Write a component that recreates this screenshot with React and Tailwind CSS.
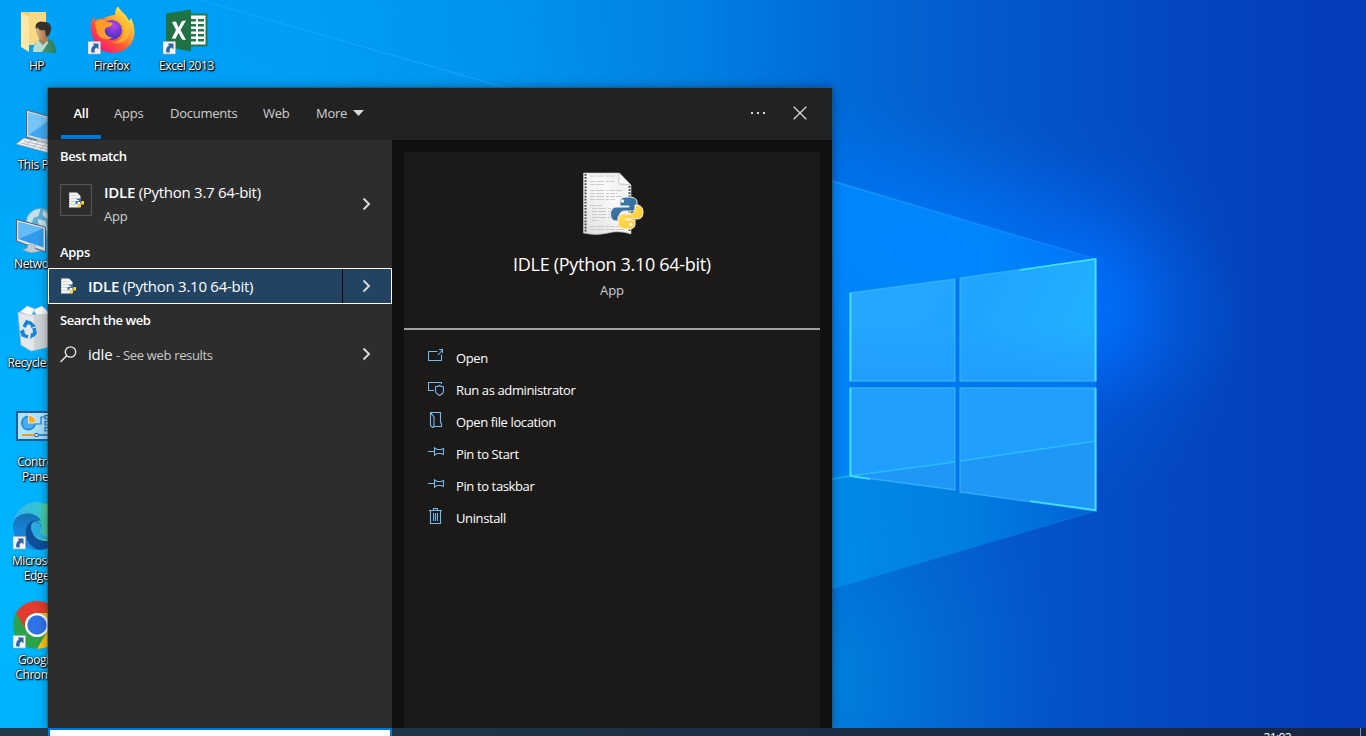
import React from "react";

const Wallpaper = () => (
  <svg className="absolute inset-0" width="1366" height="736" viewBox="0 0 1366 736">
    <defs>
      <linearGradient id="base" x1="0" x2="1366" y1="0" y2="0" gradientUnits="userSpaceOnUse">
        <stop offset="0" stopColor="#00a4fc" />
        <stop offset=".2" stopColor="#009ff8" />
        <stop offset=".38" stopColor="#0091ee" />
        <stop offset=".5" stopColor="#0081e4" />
        <stop offset=".6" stopColor="#006dd9" />
        <stop offset=".67" stopColor="#0361d0" />
        <stop offset=".75" stopColor="#0455ca" />
        <stop offset=".87" stopColor="#0446c0" />
        <stop offset="1" stopColor="#043bb8" />
      </linearGradient>
      <linearGradient id="beam" x1="400" x2="1096" y1="0" y2="0" gradientUnits="userSpaceOnUse">
        <stop offset="0" stopColor="#00a0fa" stopOpacity="0" />
        <stop offset=".6" stopColor="#008cff" />
        <stop offset=".85" stopColor="#008cff" />
        <stop offset="1" stopColor="#0078fc" />
      </linearGradient>
      <linearGradient id="lower" x1="832" x2="1096" y1="0" y2="0" gradientUnits="userSpaceOnUse">
        <stop offset="0" stopColor="#008eea" />
        <stop offset=".5" stopColor="#0082e2" />
        <stop offset="1" stopColor="#0064da" />
      </linearGradient>
      <radialGradient id="glow" cx="0" cy="0" r="1" gradientUnits="userSpaceOnUse" gradientTransform="translate(1085 310) scale(165 190)">
        <stop offset="0" stopColor="#006eff" />
        <stop offset=".25" stopColor="#0065fb" stopOpacity=".8" />
        <stop offset=".55" stopColor="#005ee8" stopOpacity=".35" />
        <stop offset="1" stopColor="#0058e0" stopOpacity="0" />
      </radialGradient>
      <radialGradient id="edgeGlow" cx="0" cy="0" r="1" gradientUnits="userSpaceOnUse" gradientTransform="translate(930 250) rotate(17) scale(330 150)">
        <stop offset="0" stopColor="#007cff" stopOpacity=".95" />
        <stop offset=".5" stopColor="#0074f4" stopOpacity=".5" />
        <stop offset="1" stopColor="#0068e0" stopOpacity="0" />
      </radialGradient>
      <radialGradient id="leftGlow" cx="0" cy="600" r="850" gradientUnits="userSpaceOnUse">
        <stop offset="0" stopColor="#00b6ff" />
        <stop offset=".35" stopColor="#00aefc" stopOpacity=".9" />
        <stop offset="1" stopColor="#0090e8" stopOpacity="0" />
      </radialGradient>
      <radialGradient id="lowGlow" cx="800" cy="680" r="260" gradientUnits="userSpaceOnUse">
        <stop offset="0" stopColor="#0088e0" stopOpacity=".95" />
        <stop offset=".5" stopColor="#0078da" stopOpacity=".5" />
        <stop offset="1" stopColor="#006ad4" stopOpacity="0" />
      </radialGradient>
      <linearGradient id="pane" x1="850" x2="1096" y1="270" y2="390" gradientUnits="userSpaceOnUse">
        <stop offset="0" stopColor="#26a6ff" />
        <stop offset=".5" stopColor="#20a6ff" />
        <stop offset="1" stopColor="#22b4ff" />
      </linearGradient>
      <linearGradient id="paneShade" x1="0" x2="0" y1="325" y2="385" gradientUnits="userSpaceOnUse">
        <stop offset="0" stopColor="#219dff" stopOpacity="0" />
        <stop offset="1" stopColor="#219dff" />
      </linearGradient>
      <linearGradient id="ray" x1="1096" x2="200" y1="0" y2="0" gradientUnits="userSpaceOnUse">
        <stop offset="0" stopColor="#20a0ff" stopOpacity=".3" />
        <stop offset=".3" stopColor="#20a4ff" stopOpacity=".7" />
        <stop offset="1" stopColor="#20b0ff" stopOpacity=".4" />
      </linearGradient>
    </defs>
    <rect width="1366" height="736" fill="url(#base)" />
    <rect width="1366" height="736" fill="url(#leftGlow)" />
    <rect width="1366" height="736" fill="url(#lowGlow)" />
    <rect width="1366" height="736" fill="url(#glow)" />
    <rect width="1366" height="500" fill="url(#edgeGlow)" />
    <path d="M200 0 832 181 1096 259V441L850 476 0 590V0Z" fill="url(#beam)" opacity=".75" />
    <path d="M200 0 832 181 1096 259" fill="none" stroke="url(#ray)" strokeWidth="1.500" />
    <path d="M832 478 850 476 1096 441V511L832 589Z" fill="url(#lower)" opacity=".9" />
    <path d="M832 589 1096 511" stroke="#0a88ee" strokeOpacity=".4" />
    <path d="M832 479 850 476" stroke="#20b8ff" strokeOpacity=".6" strokeWidth="2" />
    <path d="M957.500 278V492M850 384.500H1096" stroke="#0077ee" strokeWidth="5" />
    <path d="M850 293 955 279V381H850ZM960 278 1096 259V381H960Z" fill="url(#pane)" />
    <path d="M850 293 955 279V381H850ZM960 278 1096 259V381H960Z" fill="url(#paneShade)" />
    <path d="M850 388H955V490L850 476ZM960 388H1096V511L960 492Z" fill="#219fff" />
    <path d="M850 476 955 462V490ZM960 461 1096 441V511L960 492Z" fill="#2096f6" />
    <path d="M850 293 955 279V381H850ZM960 278 1096 259V381H960ZM850 388H955V490L850 476ZM960 388H1096V511L960 492Z" fill="none" stroke="#3cb8ff" strokeOpacity=".75" strokeWidth="1.300" />
    <path d="M850 476 955 462M960 461 1096 441" stroke="#27bdff" strokeWidth="1.400" />
    <path d="M850.500 293V381M850.500 388V476L870 479M1020 270 1095.500 259V381M1095.500 388V510L1030 501" fill="none" stroke="#3fe4ff" strokeWidth="1.700" />
  </svg>
);

const Shortcut = () => (
  <g>
    <path d="M0 34.500h12.500v12.500H0z" fill="#f4f4f4" stroke="#a8a8a8" strokeWidth=".6" />
    <path d="M4.500 36.500h6v6l-2-2c-2 1-2.300 3-1.600 5H3.500c-1-3 .2-6 2.700-7.300z" fill="#2f64a6" />
  </g>
);

const HpIcon = () => (
  <svg width="48" height="48" viewBox="0 0 48 48">
    <defs>
      <linearGradient id="skin"><stop offset="0" stopColor="#d9ad80" /><stop offset="1" stopColor="#8f623e" /></linearGradient>
      <linearGradient id="shirt"><stop offset="0" stopColor="#55a584" /><stop offset="1" stopColor="#2c7d5b" /></linearGradient>
    </defs>
    <path d="M8 5h25v33H14z" fill="#f3cf70" />
    <path d="M16 9l2-4h15v33H16z" fill="#f8da86" />
    <path d="M8 5l8 5v35l-8-5z" fill="#ffe6a4" />
    <path d="M20 45c0-7 2-11 8-12l7-1c6 1 8 6 8 14z" fill="url(#shirt)" />
    <path d="M25 33l5 5 4-5 1 3-6 9h-9c0-5 2-9 5-12z" fill="#b9dcd2" />
    <path d="M27 30h7l1 3-5 5-4-5z" fill="#ad7d55" />
    <path d="M23 20c0-4 12-6 14 0 1 7-3 13-7 13s-7-5-7-13z" fill="url(#skin)" />
    <path d="M23 22c-2-6 4-9 8-7 6-1 9 5 6 11-1 3-3 4-4 3l-1-6c-3 1-7 0-7-3z" fill="#33302d" />
  </svg>
);

const FirefoxIcon = () => (
  <svg width="48" height="48" viewBox="0 0 48 48">
    <defs>
      <linearGradient id="ff" x1=".85" y1=".05" x2=".15" y2=".9">
        <stop offset="0" stopColor="#fff44f" /><stop offset=".35" stopColor="#ffa930" />
        <stop offset=".65" stopColor="#ff5634" /><stop offset="1" stopColor="#f5157a" />
      </linearGradient>
      <radialGradient id="ffp" cx=".6" cy=".3"><stop offset="0" stopColor="#b845e8" /><stop offset="1" stopColor="#5635ce" /></radialGradient>
    </defs>
    <path d="M6 9c0 3 0 4 1 5 2-2 5-3 8-2 4-3 9-4 12-4 0-4 1-7 3-9 2 5 9 9 11 15l2-3c6 12 4 24-4 30-10 8-25 6-31-4C2 28 1 16 6 9z" fill="url(#ff)" />
    <circle cx="24" cy="23" r="10" fill="url(#ffp)" />
    <path d="M7 15c4-3 8-3 11 0 3 0 6 0 7 2-2 3-6 3-8 5-1 5 3 9 8 8-7 5-15 1-16-5-1-4-2-7-2-10z" fill="#ff9b2b" />
    <path d="M30 12c5 3 7 8 6 13-1 7-7 11-13 10 10 4 19-2 18-12-1-5-5-10-11-11z" fill="#ffc52c" opacity=".65" />
    <Shortcut />
  </svg>
);

const ExcelIcon = () => (
  <svg width="48" height="48" viewBox="0 0 48 48">
    <rect x="24" y="6.500" width="20.500" height="33" rx="1" fill="#1f7a46" />
    <path d="M26 8.500h16.500v29H26z" fill="#fff" />
    <path d="M28 12h5v2.500h-5zM35 12h6v2.500h-6zM28 17h5v2.500h-5zM35 17h6v2.500h-6zM28 22h5v2.500h-5zM35 22h6v2.500h-6zM28 27h5v2.500h-5zM35 27h6v2.500h-6zM28 32h5v2.500h-5zM35 32h6v2.500h-6z" fill="#1f7a46" />
    <path d="M3 6.500l25-4v42L3 39.500z" fill="#207245" />
    <path d="M9 15l4-.4 2.500 6L19 14l4-.5-5.500 9.500L23 33l-4-.4-3.500-6.800-3 6-3.800-.4L13 23z" fill="#fff" />
    <Shortcut />
  </svg>
);

const PcIcon = () => (
  <svg width="48" height="48" viewBox="0 0 48 48">
    <path d="M13.500 4 48 14v27L13.500 31z" fill="#d5dde3" stroke="#56636e" />
    <path d="M15.500 6.500 48 16v22L15.500 29z" fill="#3ea8f2" />
    <path d="M15.500 6.500 38 13 15.500 29z" fill="#78c6f8" />
    <path d="M20 37q10-8 22-1v7H31z" fill="#c4cbd1" />
    <path d="M3 38l8-6 35 8-10 7z" fill="#edf0f2" stroke="#8c98a2" strokeWidth=".8" />
    <path d="M8 37l28 7M11 35l29 7M13 39l7-6M20 41l7-6M27 43l7-6" stroke="#a5afb7" strokeWidth=".8" />
  </svg>
);

const NetworkIcon = () => (
  <svg width="48" height="48" viewBox="13.500 -2 48 48">
    <circle cx="41" cy="16" r="15" fill="#5faed6" />
    <path d="M28 10q6-9 13-8l-2 7-5 2-2 6-5 1zM38 12l8 2 2 9-7 3zM44 3l7 6-3 3-5-4z" fill="#c2e1ea" />
    <path d="M17 12.500 46 20v25L17 34z" fill="#dce3e8" stroke="#536270" />
    <path d="M19 15l25 6.500v19L19 32z" fill="#2f9bea" />
    <path d="M19 15l25 6.500L19 32z" fill="#65b9f5" />
    <path d="M28 37l8 2v3l5 2-9 2-9-3 5-2z" fill="#c3cbd1" stroke="#8b969e" strokeWidth=".6" />
  </svg>
);

const RecycleIcon = () => (
  <svg width="48" height="48" viewBox="13 1 48 48">
    <path d="M18 9l11 3 23-2-4 34-17 4-10-6z" fill="#e4e7e9" stroke="#b5bdc3" strokeWidth=".8" />
    <path d="M34 12v35l14-4 4-33z" fill="#cdd2d6" />
    <path d="M20 9l7-6 8 3-4 7zM33 7l9-4 8 8-13 1z" fill="#f7f8f8" stroke="#bcc3c7" strokeWidth=".6" />
    <g fill="none" stroke="#1682d8" strokeWidth="3.500">
      <path d="M24 24l3-5 5 2M34 25l1 5-3 3M28 34l-5-2-1-4" />
    </g>
    <path d="M30 18l6 5-5 2zM36 32l-6 4 1-6zM19 29l5-3 1 5z" fill="#1682d8" />
  </svg>
);

const ControlIcon = () => (
  <svg width="48" height="48" viewBox="0 0 48 48">
    <path d="M3 8h45v30H3z" fill="#225f91" />
    <path d="M5 10h43v26H5z" fill="#a4dbfb" />
    <path d="M5 10h35L12 36H5z" fill="#bce8ff" opacity=".6" />
    <circle cx="15.500" cy="20" r="7.500" fill="#2385d1" />
    <circle cx="15.500" cy="20" r="6" fill="#4aacec" />
    <path d="M15.500 20v-8a7 7 0 0 1 7 8z" fill="#ffae1a" stroke="#fff" strokeWidth=".7" />
    <path d="M23 21h5v-7h5M32 12.500h16v3.500H32zM32 18.500h16V22H32zM32 24.500h16V28H32z" fill="none" stroke="#1879c1" strokeWidth="1.200" />
    <path d="M9 32h14" stroke="#f29c1d" strokeWidth="2" />
    <path d="M24 32h24" stroke="#1870bb" strokeWidth="1.500" />
    <path d="M22 30.500h3v3h-3z" fill="#fff" stroke="#1870bb" />
  </svg>
);

const EdgeIcon = () => (
  <svg width="48" height="48" viewBox="0 0 48 48">
    <defs>
      <linearGradient id="eg"><stop offset="0" stopColor="#34b4ee" /><stop offset=".55" stopColor="#35c5cf" /><stop offset=".85" stopColor="#67d95b" /></linearGradient>
      <linearGradient id="eb" x1="0" x2="0" y1="0" y2="1"><stop offset="0" stopColor="#1470b4" /><stop offset=".4" stopColor="#1681d6" /><stop offset="1" stopColor="#1b8be0" /></linearGradient>
    </defs>
    <circle cx="24" cy="24" r="24" fill="url(#eg)" />
    <path d="M0 23C2 9 21 9 27 17c2 3 3 6 2 9l-6-3c-7 6 0 20 12 21-3 3-8 4-12 4C10 48-1 37 0 23z" fill="url(#eb)" />
    <path d="M24 18c-4 1-6 4-6 7 0 8 6 14 15 14 6 0 10-2 13-4-4 9-12 13-20 13-11-3-16-16-12-24 2-4 6-6 10-6z" fill="#0e4e9a" />
    <path d="M18 24c1-5 6-6 9-3s2 5 1 7c-1 3 5 6 10 5l9-2 1-9-8-9-12-1c2 3 2 6 0 7-3-1-7 0-10 5z" fill="#3fcaa6" />
    <path d="M18 25c1-5 7-6 10-2 1 3 1 4-1 6 0 3 6 7 12 6-8 5-21 0-21-10z" fill="#2ba9e3" />
    <Shortcut />
  </svg>
);

const ChromeIcon = () => (
  <svg width="48" height="48" viewBox="0 0 48 48">
    <circle cx="24" cy="24" r="24" fill="#2ba24c" />
    <path d="M3.200 12A24 24 0 0 1 44.800 12H24a12 12 0 0 0-10.400 18z" fill="#e33b2e" />
    <path d="M44.800 12A24 24 0 0 1 24 48l10.400-18A12 12 0 0 0 24 12z" fill="#fbc116" />
    <circle cx="24" cy="24" r="12" fill="#fff" />
    <circle cx="24" cy="24" r="9.700" fill="#2f73e8" />
    <Shortcut />
  </svg>
);

const PythonDoc = ({ size }) => (
  <svg width={size} height={size} viewBox="0 0 64 64">
    <defs>
      <linearGradient id="paper" x1="0" y1="1" x2="1" y2="0"><stop offset="0" stopColor="#dedede" /><stop offset=".6" stopColor="#fafafa" /><stop offset="1" stopColor="#e8e8e8" /></linearGradient>
      <linearGradient id="pyb" x1="0" y1="0" x2="1" y2="1"><stop offset="0" stopColor="#3c7fb5" /><stop offset="1" stopColor="#37628d" /></linearGradient>
      <linearGradient id="pyy" x1="0" y1="0" x2="1" y2="1"><stop offset="0" stopColor="#ffe267" /><stop offset="1" stopColor="#ffc62a" /></linearGradient>
    </defs>
    <path d="M3.500 1h36L51 13v49q-12-4-23-1-12 3-24.500 0z" fill="url(#paper)" stroke="#bcbcbc" strokeWidth=".7" />
    <path d="M5.500 2v58M49.500 14v46" stroke="#4c4c48" strokeWidth="2" strokeDasharray="1.700 1.400" />
    <path d="M39 1v11q5 0 12 1z" fill="#fafafa" stroke="#b5b5b5" strokeWidth=".7" />
    <g stroke="#c4c6c7" strokeWidth=".9" strokeDasharray="5 1 8 2 3 1">
      <path d="M10 4h26M10 9.500h24M10 12.500h16M10 18.500h32M10 21.500h27M10 24.500h32M10 27.500h26M10 33.500h12M12 36.500h21M12 39.500h18M12 42.500h19M12 45.500h20M12 48.500h7M10 54.500h30M10 57.500h35" />
    </g>
    <g stroke="#f3f3f3" strokeWidth="1" transform="translate(2 0)">
      <path d="M46 25c-7 0-8 2-8 5v4h9v1H34c-3 0-5.500 3-5.500 7s2 7 5.500 7h3v-4c0-3 2-6 6-6h8c3 0 4-2 4-4v-5c0-3-3-5-9-5z" fill="url(#pyb)" />
      <path d="M45 57c7 0 8-2 8-5v-4h-9v-1h11c4 0 6-2 6-7s-3-7-6-7h-2v3c0 3-2 6-5 6h-7c-3 0-5 2-5 4v6c0 3 3 5 9 5z" fill="url(#pyy)" />
    </g>
    <circle cx="42.500" cy="29" r="1.700" fill="#fff" />
    <circle cx="51" cy="52.500" r="1.700" fill="#fff" />
  </svg>
);

const SmallPythonDoc = () => (
  <svg width="16" height="16" viewBox="0 0 16 16">
    <path d="M1 .5h8L12.500 4v11.500H1z" fill="#f4f4f4" />
    <path d="M1.500 1v14" stroke="#a4a4a4" strokeDasharray="1 1" />
    <path d="M3 3.500h5M3 6.500h6M3 9.500h4M3 12.500h5" stroke="#d2d2d2" />
    <path d="M9 6.500h4V10H9.500v2H7.500V9H11V8H9z" fill="#2f72ad" />
    <path d="M13.500 9H16v3.500h-3V15H9.500v-3H13z" fill="#ffd23a" />
  </svg>
);

const Chevron = () => (
  <svg width="9" height="14" viewBox="0 0 9 14" fill="none" stroke="#d8d8d8" strokeWidth="2"><path d="M1.500 1.500 7 7 1.500 12.500" /></svg>
);

const actionIcons = {
  open: <path d="M9.500 3.500h-9v9h13v-6M10 7 14.500 2M11 1.500h3.500V5" />,
  admin: <><path d="M13.500 4V2.500H.5v8H6" /><path d="M11.500 5.500c1 1 2.500 1.300 4 1.300v3.700c0 2.500-2 4-4 5-2-1-4-2.500-4-5V6.800c1.500 0 3-.3 4-1.300z" /></>,
  folder: <path d="M6 14.500h7.500v-3l-1-1v-10h-10v13l2 2c1 0 1.500-1 1.500-2V5L2.500.5" />,
  pin: <path d="M0 7.500h6M6.500 3v9M6.500 4 9 5.500h4l2.500-1v6l-2.500-1H9l-2.500 1.500" />,
  trash: <path d="M1 2.500h13M2.500 2.500v13h10v-13M5.500 2.500v-2h4v2M5.500 5v8M7.500 5v8M9.500 5v8" />,
};

const Action = ({ icon, children }) => (
  <div className="flex h-8 items-center text-[13px] text-white">
    <svg className="mr-3 -mt-1.5 shrink-0" width="16" height="16" viewBox="0 0 16 16" fill="none" stroke="#76b9ed" strokeWidth="1.100">{actionIcons[icon]}</svg>
    <span className="tracking-[-0.38px]">{children}</span>
  </div>
);

const DesktopItem = ({ icon, children }) => (
  <div className="flex h-[99px] w-[75px] flex-col items-center pt-2">
    {icon}
    <div className="mt-[3px] text-center text-[12px] leading-[15px] tracking-[-0.42px] whitespace-nowrap text-white [text-shadow:1px_1px_2px_#000,0_0_2px_#000,1px_1px_1px_#000]">{children}</div>
  </div>
);

export default function App() {
  return (
    <div className="relative flow-root h-[736px] w-[1366px] overflow-hidden bg-[#0078d7] font-['Open_Sans','Noto_Sans',sans-serif]">
      <Wallpaper />

      <div className="relative -mt-px -ml-px flex">
        <div className="flex flex-col">
          <DesktopItem icon={<HpIcon />}>HP</DesktopItem>
          <DesktopItem icon={<PcIcon />}>This PC</DesktopItem>
          <DesktopItem icon={<NetworkIcon />}>Network</DesktopItem>
          <DesktopItem icon={<RecycleIcon />}>Recycle Bin</DesktopItem>
          <DesktopItem icon={<ControlIcon />}>Control<br />Panel</DesktopItem>
          <DesktopItem icon={<EdgeIcon />}>Microsoft<br />Edge</DesktopItem>
          <DesktopItem icon={<ChromeIcon />}>Google<br />Chrome</DesktopItem>
        </div>
        <DesktopItem icon={<FirefoxIcon />}>Firefox</DesktopItem>
        <DesktopItem icon={<ExcelIcon />}>Excel 2013</DesktopItem>
      </div>

      <div className="absolute top-[88px] left-12 flex h-[640px] w-[784px] flex-col shadow-[0_0_10px_rgba(0,0,0,0.4),0_0_0_1px_rgba(70,90,100,0.5)]">
        <header className="flex h-[52px] shrink-0 bg-[#222222] text-[13px] text-[#cfcfcf]">
          <nav className="flex pl-[13px] leading-[50px] tracking-[-0.25px]">
            <div className="h-[51px] w-[40px] border-b-4 border-[#0078d7] text-center font-semibold text-white">All</div>
            <div className="ml-[13px] w-[56px]">Apps</div>
            <div className="w-[93px]">Documents</div>
            <div className="w-[53px]">Web</div>
            <div className="flex h-[50px] items-center">
              <span className="w-[37px]">More</span>
              <svg width="11" height="6" viewBox="0 0 11 6"><path d="M0 0h11L5.500 6z" fill="#d8d8d8" /></svg>
            </div>
          </nav>
          <div className="ml-auto flex h-[50px] items-center gap-[27px] pr-[25px]">
            <svg width="15" height="2" viewBox="0 0 15 2"><path d="M0 0h2v2H0zM6 0h2v2H6zM12 0h2v2h-2z" fill="#d8d8d8" /></svg>
            <svg width="14" height="14" viewBox="0 0 14 14" fill="none" stroke="#d8d8d8" strokeWidth="1.300"><path d="M.7.7 13.300 13.300M13.300.7.7 13.300" /></svg>
          </div>
        </header>

        <div className="flex flex-1">
          <section className="flex w-[344px] flex-col bg-[#2d2d2d] text-white">
            <h2 className="h-[34px] pl-3 text-[13px] leading-[33px] font-semibold tracking-[-0.4px]">Best match</h2>
            <div className="flex h-[60px] items-center pr-[21px] pl-3">
              <div className="-mt-2 flex h-8 w-8 items-center justify-center border border-[#555555]"><SmallPythonDoc /></div>
              <div className="ml-3">
                <div className="text-[15px] leading-6 tracking-[-0.27px]"><b className="font-semibold">IDLE</b> (Python 3.7 64-bit)</div>
                <div className="text-[13px] leading-6 tracking-[-0.2px] text-[#cfcfcf]">App</div>
              </div>
              <div className="ml-auto"><Chevron /></div>
            </div>
            <h2 className="h-[34px] pl-3 text-[13px] leading-[37px] font-semibold tracking-[-0.3px]">Apps</h2>
            <div className="flex h-9 border border-white bg-[#224362]">
              <div className="flex w-[294px] items-center border-r border-black pl-[11px]">
                <SmallPythonDoc />
                <div className="ml-3 text-[15px] tracking-[-0.27px]"><b className="font-semibold">IDLE</b> (Python 3.10 64-bit)</div>
              </div>
              <div className="flex flex-1 items-center justify-end pr-5"><Chevron /></div>
            </div>
            <h2 className="h-8 pl-3 text-[13px] leading-[33px] font-semibold tracking-[-0.42px]">Search the web</h2>
            <div className="flex h-9 items-center pr-[21px] pl-3">
              <svg width="17" height="17" viewBox="0 0 17 17" fill="none" stroke="#eeeeee" strokeWidth="1.300"><circle cx="10.500" cy="6" r="5.200" /><path d="M6.700 9.700.5 16" /></svg>
              <div className="ml-[11px] text-[15px] tracking-[-0.2px]">idle <span className="text-[13px] tracking-[-0.33px] text-[#c8c8c8]">- See web results</span></div>
              <div className="ml-auto"><Chevron /></div>
            </div>
          </section>

          <section className="flex flex-1 bg-[#11100f] px-3 pt-3">
            <div className="flex flex-1 flex-col bg-[#1b1a19]">
              <div className="flex h-[178px] flex-col items-center border-b-2 border-[#a0a0a0] pt-5">
                <PythonDoc size={64} />
                <div className="mt-[14px] text-[18px] leading-7 tracking-[-0.3px] text-white">IDLE (Python 3.10 64-bit)</div>
                <div className="text-[13px] leading-6 text-[#cfcfcf]">App</div>
              </div>
              <div className="flex flex-col pt-[13px] pl-6">
                <Action icon="open">Open</Action>
                <Action icon="admin">Run as administrator</Action>
                <Action icon="folder">Open file location</Action>
                <Action icon="pin">Pin to Start</Action>
                <Action icon="pin">Pin to taskbar</Action>
                <Action icon="trash">Uninstall</Action>
              </div>
            </div>
          </section>
        </div>
      </div>

      <footer className="absolute bottom-0 left-0 flex h-2 w-full overflow-hidden bg-linear-to-r from-[#213b47] to-[#172545] pl-12">
        <div className="h-10 w-[344px] border-2 border-[#0078d7] bg-white" />
        <div className="mr-[69px] ml-auto pt-[2px] text-[12px] leading-4 tracking-[-0.6px] text-white">21:02</div>
        <div className="h-10 w-[6px] border-l border-[#8290a5]" />
      </footer>
    </div>
  );
}
